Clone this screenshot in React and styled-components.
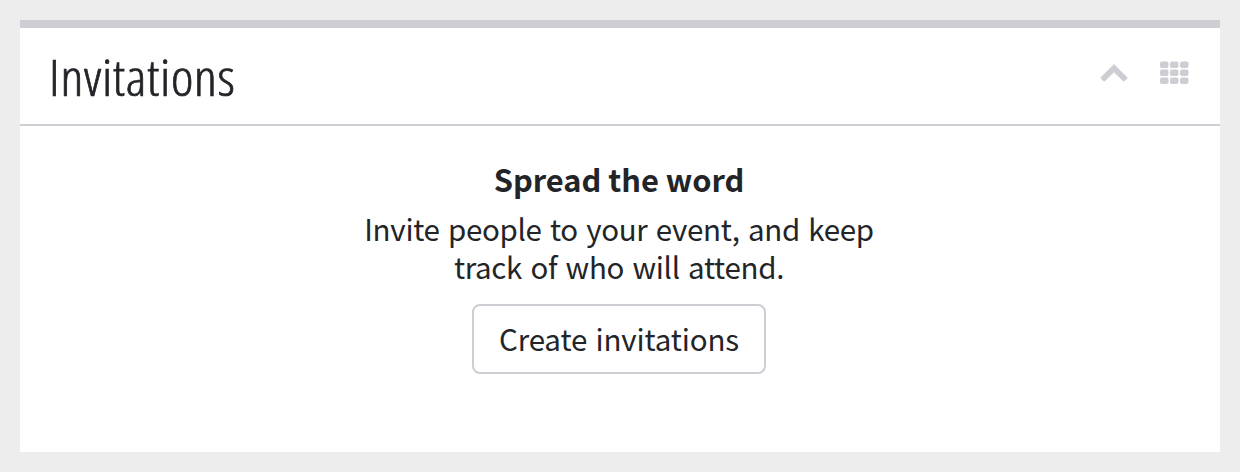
import React from "react";
import styled, { createGlobalStyle } from "styled-components";

const GlobalStyle = createGlobalStyle`
  * { box-sizing: border-box; }
  body {
    margin: 0;
    background: #ededed;
    color: #222428;
    font-family: "Noto Sans CJK SC", "Noto Sans", sans-serif;
  }
`;

const Page = styled.main`
  height: 472px;
  padding: 20px;
`;

const Panel = styled.section`
  height: 432px;
  background: #fff;
  border-top: 8px solid #cdced3;
`;

const Header = styled.header`
  display: flex;
  align-items: flex-start;
  justify-content: space-between;
  height: 98px;
  padding: 0 30px 0 29px;
  border-bottom: 2px solid #cdced3;
`;

const Title = styled.h1`
  margin: 0;
  font-family: "Open Sans", "Noto Sans", sans-serif;
  font-stretch: 75%;
  font-size: 50px;
  font-weight: 300;
  line-height: 99px;
  letter-spacing: 0.7px;
  white-space: nowrap;
  -webkit-text-stroke: 0.7px currentColor;
  transform: scaleX(1.07);
  transform-origin: left;
`;

const Actions = styled.div`
  display: flex;
  gap: 30px;
  padding-top: 33px;
`;

const IconButton = styled.button`
  display: flex;
  padding: 0;
  border: 0;
  background: none;
  color: #cdced3;
`;

const Body = styled.div`
  display: flex;
  flex-direction: column;
  align-items: center;
  padding: 33px 2px 0 0;
  text-align: center;
`;

const Heading = styled.h2`
  margin: 0;
  font-size: 30.8px;
  font-weight: 700;
  line-height: 40px;
  white-space: nowrap;
`;

const Line = styled.span`
  display: block;
  white-space: nowrap;
`;

const Copy = styled.p`
  margin: 10px 0 19px;
  font-size: 29.5px;
  line-height: 38px;
  letter-spacing: -0.3px;
  word-spacing: 2px;
`;

const CreateButton = styled.button`
  width: 294px;
  height: 70px;
  padding: 0 0 2px;
  border: 2px solid #cdced3;
  border-radius: 8px;
  background: #fff;
  color: inherit;
  font: inherit;
  font-size: 29.5px;
  letter-spacing: -0.15px;
  word-spacing: 2px;
  white-space: nowrap;
`;

const cells = [0, 1, 2];

export default function App() {
  return (
    <>
      <GlobalStyle />
      <Page>
        <Panel>
          <Header>
            <Title>Invitations</Title>
            <Actions>
              <IconButton aria-label="Collapse">
                <svg width="30" height="24" viewBox="0 0 30 24">
                  <path
                    d="M14 3 27.2 16.2Q27.8 16.8 27.2 17.4L24.3 20.3Q23.7 20.9 23.1 20.3L14 11.3 4.9 20.3Q4.3 20.9 3.7 20.3L.8 17.4Q.2 16.8 .8 16.2Z"
                    fill="currentColor"
                  />
                </svg>
              </IconButton>
              <IconButton aria-label="Move">
                <svg width="30" height="24" viewBox="0 0 30 24" fill="currentColor">
                  {cells.map((r) =>
                    cells.map((c) => (
                      <rect key={`${r}${c}`} x={c * 10} y={0.5 + r * 8} width="8.5" height="6.5" rx="2" />
                    ))
                  )}
                </svg>
              </IconButton>
            </Actions>
          </Header>
          <Body>
            <Heading>Spread the word</Heading>
            <Copy>
              <Line>Invite people to your event, and keep</Line>
              <Line>track of who will attend.</Line>
            </Copy>
            <CreateButton>Create invitations</CreateButton>
          </Body>
        </Panel>
      </Page>
    </>
  );
}
